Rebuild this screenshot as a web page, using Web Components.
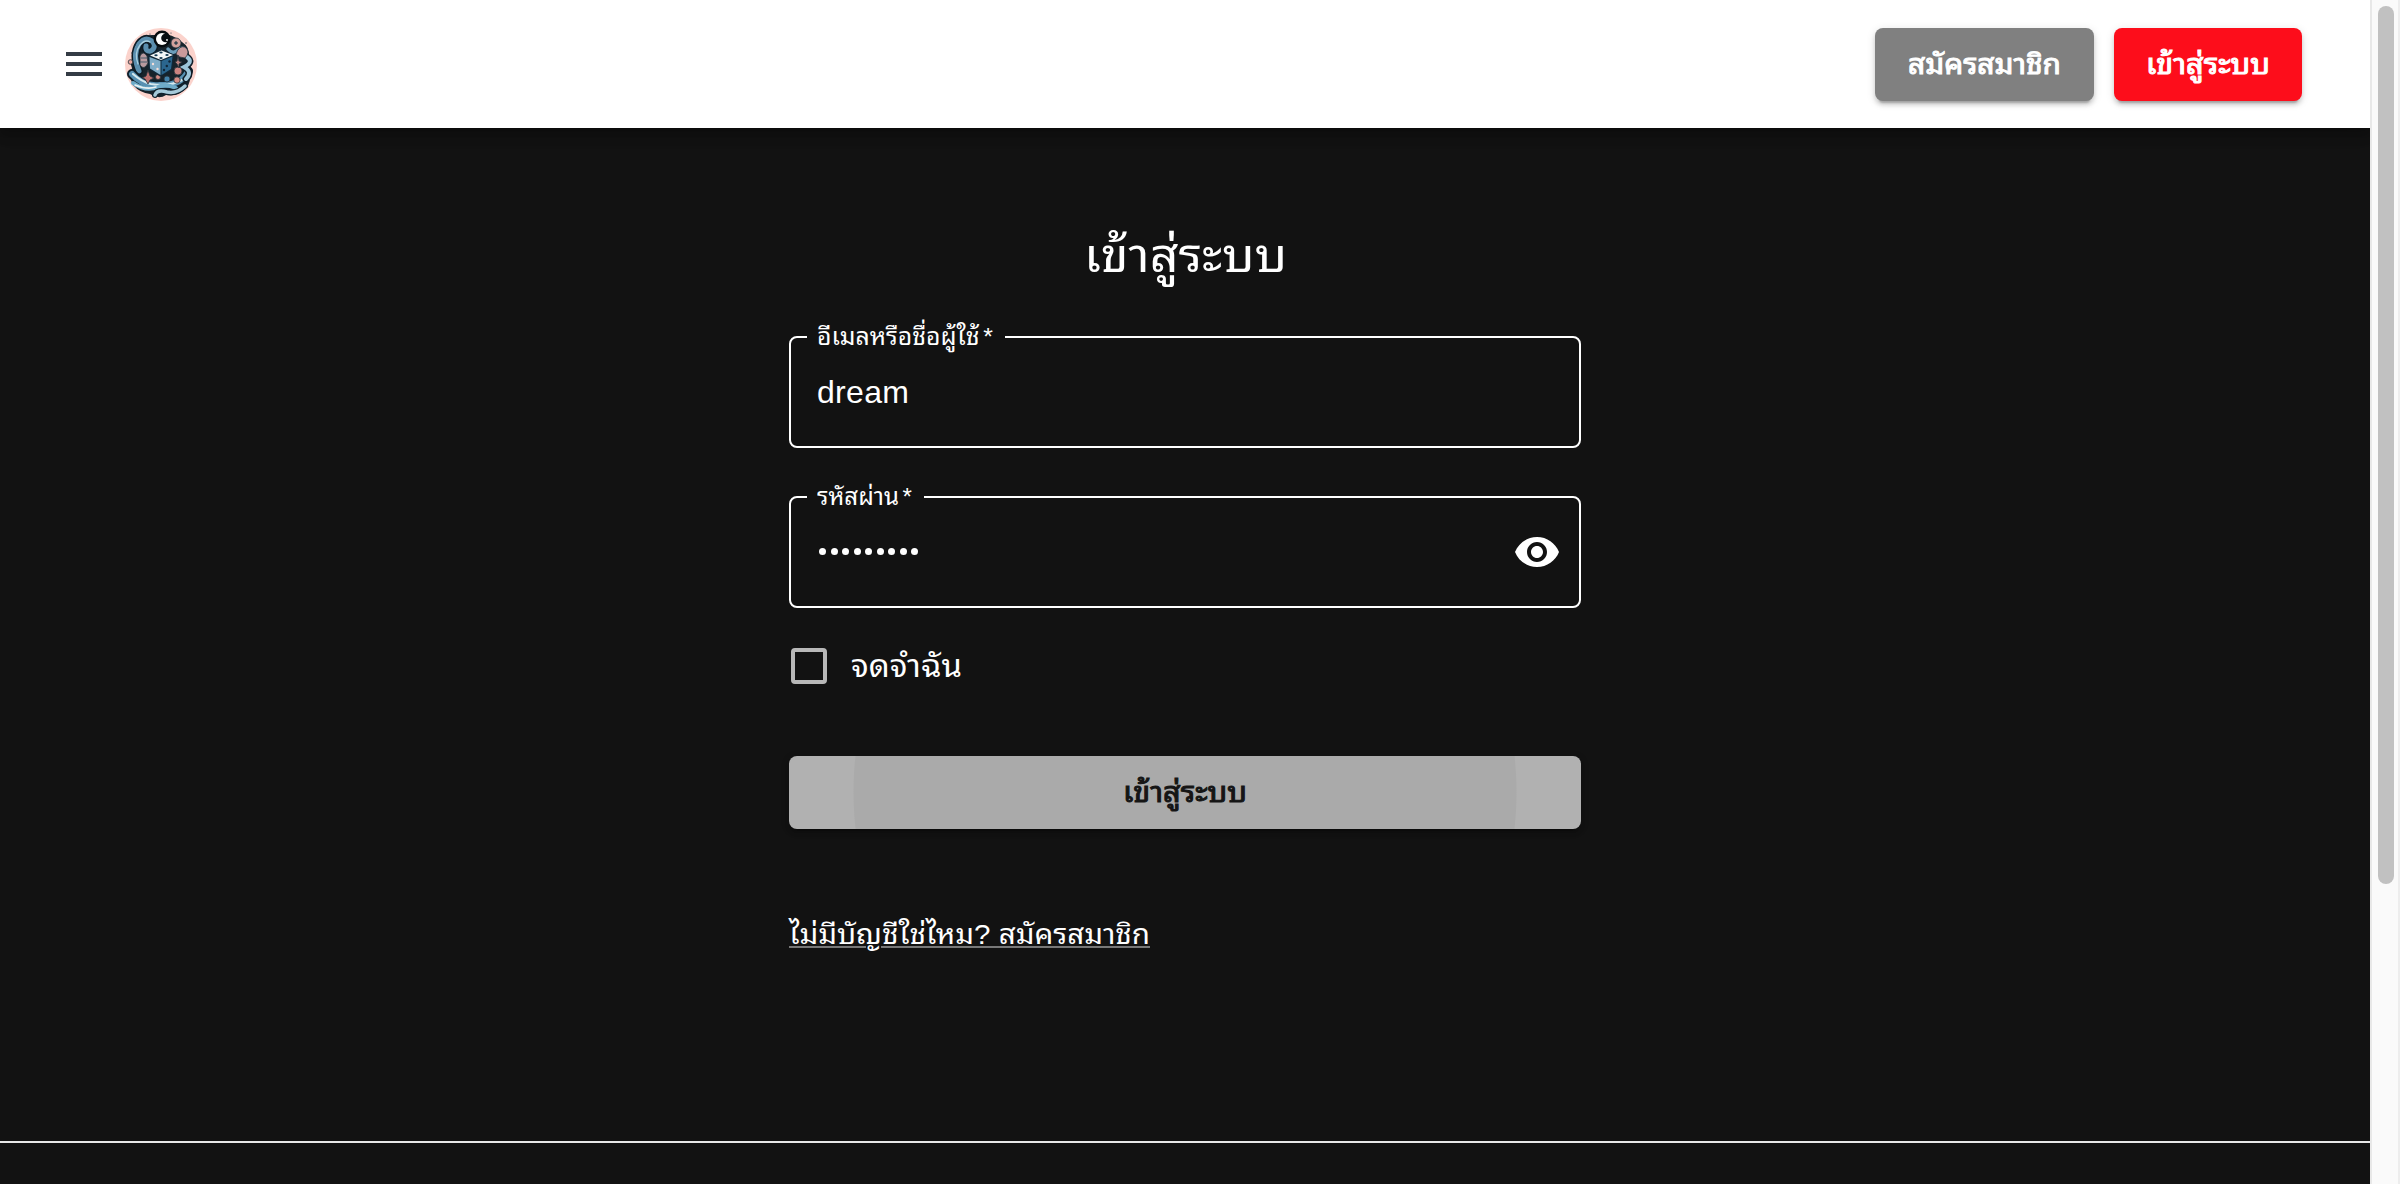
<!DOCTYPE html>
<html lang="th">
<head>
<meta charset="utf-8">
<title>เข้าสู่ระบบ</title>
<style>
html,body{margin:0;height:100%;overflow:hidden;background:#121212}
body{font-family:"Liberation Sans","Noto Sans Thai Looped","Loma","Waree","Garuda","Noto Serif Thai","Noto Sans Thai","Noto Sans",sans-serif;color:#fff}
</style>
</head>
<body>
<login-page></login-page>
<script>
const define=(name,html,init)=>customElements.define(name,class extends HTMLElement{
  constructor(){super();this.attachShadow({mode:'open'}).innerHTML=html;}
  connectedCallback(){if(init)init.call(this,this.shadowRoot);}
});

/* Text that is condensed or widened to the width given in its "width" attribute. */
define('fit-text',`<style>
:host{display:inline-block;white-space:nowrap;line-height:1.4}
span{display:inline-block;transform-origin:0 50%;text-decoration:var(--line,none)}
</style><span><slot></slot></span>`,function(r){
  const s=r.querySelector('span'),w=+this.getAttribute('width');
  const n=s.getBoundingClientRect().width;
  this.style.width=w+'px';
  if(n)s.style.transform='scaleX('+w/n+')';
});

define('menu-icon',`<style>:host{display:block;width:36px;height:24px}svg{display:block}</style>
<svg width="36" height="24" fill="#343c45"><path d="M0 0h36v4H0zM0 10h36v4H0zM0 20h36v4H0z"/></svg>`);

define('brand-logo',`<style>:host{display:block;width:72px;height:73px}svg{display:block}</style>
<svg width="72" height="73" viewBox="0 0 72 73">
<ellipse cx="36" cy="36.500" rx="36" ry="36.500" fill="#fbd3cc"/>
<path d="M29 7Q20 6 14 13Q8 20 9 29Q4 34 7 40Q4 49 8 57Q15 65 25 66Q34 72 41 67Q54 69 61 60Q67 54 64 44Q68 34 64 29Q65 19 57 14Q49 8 44 7Z" fill="#17232b"/>
<g fill="none" stroke-linecap="round">
<path d="M14 43Q7 27 14 16Q20 8 27 13Q32 19 26 23Q20 24 21 18" stroke="#0e1b24" stroke-width="8"/>
<path d="M14 43Q7 27 14 16Q20 8 27 13Q32 19 26 23Q20 24 21 18" stroke="#5a8eae" stroke-width="5"/>
<path d="M13 36Q9 25 15 17Q20 11 25 14" stroke="#a9cfdf" stroke-width="1.300"/>
<path d="M7 46Q18 59 35 57Q56 58 63 43" stroke="#10202b" stroke-width="10"/>
<path d="M7 46Q18 59 35 57Q56 58 63 43" stroke="#5790b2" stroke-width="6"/>
<path d="M8 46Q17 54 26 56Q45 59 57 52" stroke="#d6e9ee" stroke-width="2.200"/>
<path d="M8 55Q21 64 33 59Q40 55 51 60" stroke="#6eabc8" stroke-width="4"/>
<path d="M10 57Q22 62 31 59" stroke="#e9f1f2" stroke-width="1.500"/>
<path d="M30 67Q32 61 42 64Q52 66 60 58" stroke="#10202b" stroke-width="6"/>
<path d="M30 67Q32 61 42 64Q52 66 60 58" stroke="#a5c9d9" stroke-width="3.500"/>
<path d="M62 29Q69 34 59 39Q68 44 61 51" stroke="#101d27" stroke-width="7"/>
<path d="M62 29Q69 34 59 39Q68 44 61 51" stroke="#9bc4d9" stroke-width="4"/>
<path d="M43 21Q48 27 53 22Q58 18 61 23" stroke="#6b9dba" stroke-width="3.500"/>
</g>
<g stroke="#26343c" stroke-width=".8">
<path d="M51 26Q54 17 60 19Q66 24 60 30Q54 30 51 26Z" fill="#c99a9b"/>
<circle cx="51" cy="15" r="5" fill="#d3a29d"/><circle cx="51" cy="15" r="1.300" fill="#435562"/>
<path d="M15 28Q18 22 22 28L23 35Q19 43 15 37Z" fill="#b99a9f"/>
<path d="M16 30h6M15 34h7" stroke="#475b6a" stroke-width="1.200"/>
<circle cx="5.500" cy="34" r="2.300" fill="#e8a69f"/><circle cx="53" cy="43" r="4" fill="#cc8380"/>
<circle cx="52" cy="52" r="3.200" fill="#d58d86"/><circle cx="42" cy="51" r="3" fill="#4383ab"/>
<circle cx="33" cy="49" r="2.500" fill="#d58d86"/><path d="M23 42l2 6 4 2-4 2-2 4-3-5-3-1 4-2z" fill="#bd716f"/>
<path d="M53 27l1 6 3 1-3 2v4l-2-4-2-2 2-1z" fill="#b77f7e"/>
</g>
<circle cx="37" cy="11" r="8.500" fill="#060b0e"/><circle cx="37" cy="11" r="6" fill="#fff"/><circle cx="40.500" cy="10" r="4.300" fill="#080d11"/><circle cx="42" cy="12" r=".9" fill="#fff"/>
<path d="M23 27L36 21L49 26.500L47 42.500L35 48.500L23.500 41Z" fill="#112838"/>
<path d="M25 27.500L36.500 22.500L48 27L36 32Z" fill="#f4f8f8"/>
<path d="M24.500 29L35.500 33V47L25 40.500Z" fill="#7fadc8"/><path d="M36.500 33L47.500 28.500L46 41L36.500 47Z" fill="#2b668e"/>
<g fill="#183b53"><ellipse cx="36" cy="24.500" rx="1.700" ry="1"/><ellipse cx="31" cy="27.300" rx="1.700" ry="1"/><ellipse cx="36" cy="30" rx="1.700" ry="1"/><ellipse cx="42" cy="27" rx="1.700" ry="1"/></g>
<g fill="#102638"><circle cx="39" cy="42" r="1.200"/><circle cx="41.800" cy="38" r="1.200"/><circle cx="44.500" cy="33.500" r="1.200"/></g>
<g fill="#f7dfda"><circle cx="28" cy="36" r="1.200"/><circle cx="32.500" cy="41" r="1.200"/></g>
<g fill="#213442"><circle cx="10" cy="17" r=".7"/><circle cx="7" cy="25" r=".7"/><circle cx="46" cy="5" r=".6"/><circle cx="61" cy="15" r=".7"/><circle cx="66" cy="37" r=".7"/><circle cx="25" cy="6" r=".6"/></g>
</svg>`);

define('action-button',`<style>
:host{display:flex;align-items:center;justify-content:center;box-sizing:border-box;height:73px;padding:1px 1px 0 0;border-radius:8px;background:var(--fill);color:var(--ink,#fff);font-size:28px;font-weight:400;-webkit-text-stroke:1px currentColor;
box-shadow:0 6px 2px -4px rgba(0,0,0,.2),0 4px 4px rgba(0,0,0,.14),0 2px 10px rgba(0,0,0,.12)}
</style><slot></slot>`);

define('site-header',`<style>
:host{display:flex;align-items:center;box-sizing:border-box;height:128px;padding:0 68px 0 66px;background:#fff;box-shadow:0 4px 8px -2px rgba(0,0,0,.2),0 8px 10px rgba(0,0,0,.14),0 2px 20px rgba(0,0,0,.12)}
brand-logo{margin-left:23px}.actions{display:flex;gap:20px;margin-left:auto}
.join{width:219px;--fill:#808080}.login{width:188px;--fill:#fd0d1b}
</style><menu-icon></menu-icon><brand-logo></brand-logo>
<div class="actions"><action-button class="join"><fit-text width="153">สมัครสมาชิก</fit-text></action-button>
<action-button class="login"><fit-text width="124">เข้าสู่ระบบ</fit-text></action-button></div>`);

define('outlined-field',`<style>
:host{display:block}
fieldset{box-sizing:border-box;width:792px;height:123px;margin:0;padding:0 18px 0 16px;border:2px solid #fff;border-radius:8px;min-width:0}
legend{height:24px;padding:0 12px 0 10px;font-size:24px;word-spacing:-3px;display:flex;align-items:center}
.row{display:flex;align-items:center;justify-content:space-between;height:85px;padding-left:10px;font-size:32px;letter-spacing:.3px}
</style><fieldset><legend><slot name="label"></slot></legend><div class="row"><slot></slot></div></fieldset>`);

define('password-dots',`<style>:host{display:flex;gap:4.500px;padding-left:2px}i{width:7px;height:7px;border-radius:50%;background:#fff}</style>${'<i></i>'.repeat(9)}`);

define('eye-icon',`<style>:host{display:block}svg{display:block}</style><svg width="48" height="48" viewBox="0 0 24 24" fill="#fff"><path d="M12 4.500C7 4.500 2.730 7.610 1 12c1.730 4.390 6 7.500 11 7.500s9.270-3.110 11-7.500c-1.730-4.390-6-7.500-11-7.500M12 17c-2.760 0-5-2.240-5-5s2.240-5 5-5 5 2.240 5 5-2.240 5-5 5m0-8c-1.660 0-3 1.340-3 3s1.340 3 3 3 3-1.340 3-3-1.340-3-3-3"/></svg>`);

define('check-option',`<style>:host{display:flex;align-items:center;height:48px;gap:24px;padding-left:2px;font-size:32px}
i{box-sizing:border-box;width:36px;height:36px;border:4px solid #b8b8b8;border-radius:4px}</style><i></i><slot></slot>`);

define('login-form',`<style>
:host{display:flex;flex-direction:column;width:792px;margin:0 auto;padding-top:92px;box-sizing:border-box}
h1{margin:0;height:72px;display:flex;align-items:center;justify-content:center;font-size:48px;font-weight:400}
.user{margin-top:33px}.pass{margin-top:37px}check-option{margin-top:34px}
.name{padding-top:2px}
.submit{--fill:radial-gradient(circle 332px at 396px 36px,#aaa 331px,#b1b1b1 332px);--ink:#151515;margin-top:66px}
.link{margin-top:86px;height:40px;display:flex;align-items:center;font-size:28px;--line:underline 2px #787878;text-underline-offset:2px}
</style><h1><fit-text width="203">เข้าสู่ระบบ</fit-text></h1>
<outlined-field class="user"><fit-text slot="label" width="176">อีเมลหรือชื่อผู้ใช้ *</fit-text><span class="name">dream</span></outlined-field>
<outlined-field class="pass"><fit-text slot="label" width="95">รหัสผ่าน *</fit-text><password-dots></password-dots><eye-icon></eye-icon></outlined-field>
<check-option><fit-text width="111">จดจำฉัน</fit-text></check-option>
<action-button class="submit"><fit-text width="124">เข้าสู่ระบบ</fit-text></action-button>
<div class="link"><fit-text width="361">ไม่มีบัญชีใช่ไหม? สมัครสมาชิก</fit-text></div>`);

define('scroll-track',`<style>:host{display:block;box-sizing:border-box;width:30px;height:1184px;padding:6px 4px 0 6px;background:#fafafa;border-left:2px solid #e8e8e8;border-right:2px solid #ededed}
i{display:block;width:16px;height:878px;border-radius:8px;background:#c1c1c1}</style><i></i>`);

define('login-page',`<style>
:host{display:flex;width:2400px;height:1184px;background:#121212}
main{display:flex;flex-direction:column;width:2370px;overflow:hidden}
site-header{flex:none}login-form{height:1013px;flex:none}
footer{height:41px;border-top:2px solid #e8e8e8}
</style><main><site-header></site-header><login-form></login-form><footer></footer></main><scroll-track></scroll-track>`);
</script>
</body>
</html>
